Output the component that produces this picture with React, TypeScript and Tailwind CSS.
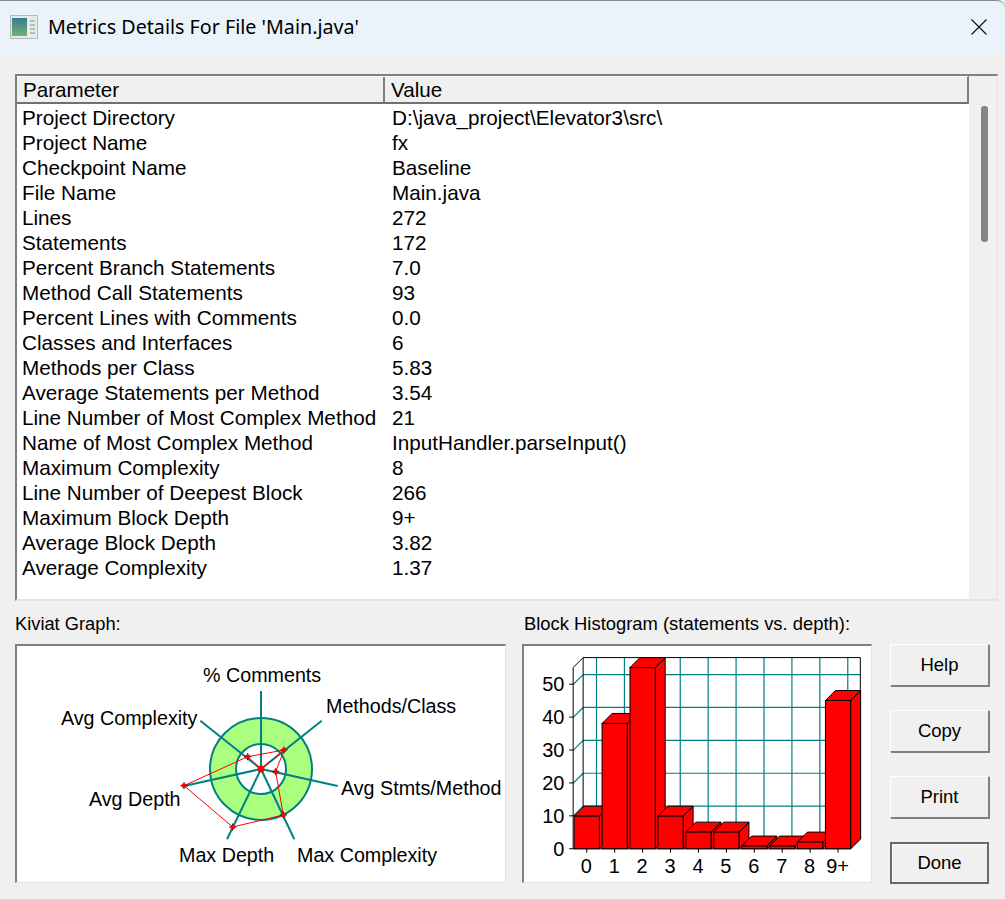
import React from 'react';

const metrics = [
  ['Project Directory', 'D:\\java_project\\Elevator3\\src\\'],
  ['Project Name', 'fx'],
  ['Checkpoint Name', 'Baseline'],
  ['File Name', 'Main.java'],
  ['Lines', '272'],
  ['Statements', '172'],
  ['Percent Branch Statements', '7.0'],
  ['Method Call Statements', '93'],
  ['Percent Lines with Comments', '0.0'],
  ['Classes and Interfaces', '6'],
  ['Methods per Class', '5.83'],
  ['Average Statements per Method', '3.54'],
  ['Line Number of Most Complex Method', '21'],
  ['Name of Most Complex Method', 'InputHandler.parseInput()'],
  ['Maximum Complexity', '8'],
  ['Line Number of Deepest Block', '266'],
  ['Maximum Block Depth', '9+'],
  ['Average Block Depth', '3.82'],
  ['Average Complexity', '1.37'],
];

const spokes = [
  [261, 691],
  [321.7, 720.7],
  [337.7, 786],
  [294.3, 839.3],
  [227, 839.3],
  [184, 786],
  [200.3, 720.7],
];

const kiviatPoints = [
  [284, 750],
  [275.7, 771.7],
  [283.3, 815],
  [232.7, 827],
  [184, 785.7],
  [247.7, 756.7],
];

const kiviatLabels = [
  { text: '% Comments', x: 203, y: 682 },
  { text: 'Methods/Class', x: 326, y: 713 },
  { text: 'Avg Stmts/Method', x: 341, y: 795 },
  { text: 'Max Complexity', x: 297, y: 862 },
  { text: 'Max Depth', x: 179, y: 862 },
  { text: 'Avg Depth', x: 89, y: 806 },
  { text: 'Avg Complexity', x: 61, y: 725 },
];

const bars = [
  { label: '0', value: 10, top: 816.3 },
  { label: '1', value: 38, top: 723.3 },
  { label: '2', value: 55, top: 667.3 },
  { label: '3', value: 10, top: 816.3 },
  { label: '4', value: 5, top: 832.3 },
  { label: '5', value: 5, top: 832.3 },
  { label: '6', value: 1, top: 846.3 },
  { label: '7', value: 1, top: 846.3 },
  { label: '8', value: 2, top: 842.3 },
  { label: '9+', value: 45, top: 700.3 },
];

const KiviatGraph = () => (
  <svg viewBox="17 646 488 236" className="block w-full h-full">
    <circle cx={261} cy={769} r={51} fill="#aaff7f" stroke="#008080" strokeWidth={2} />
    <circle cx={261} cy={769} r={25} fill="#ffffff" stroke="#008080" strokeWidth={2} />
    {spokes.map(([x, y], i) => (
      <line key={i} x1={261} y1={769} x2={x} y2={y} stroke="#008080" strokeWidth={2} />
    ))}
    <polygon
      points={kiviatPoints.map(([x, y]) => `${x},${y}`).join(' ')}
      fill="none"
      stroke="#ff0000"
      strokeWidth={1}
    />
    <polyline points="247.7,756.7 261,769 284,750" fill="none" stroke="#ff0000" strokeWidth={1} />
    <circle cx={261} cy={769} r={3.5} fill="#ff0000" />
    {kiviatPoints.map(([x, y], i) => (
      <g key={i}>
        <path d={`M${x - 3.5} ${y}H${x + 3.5}M${x} ${y - 3.5}V${y + 3.5}`} stroke="#000000" strokeWidth={1} />
        <rect x={x - 2} y={y - 2} width={4} height={4} fill="#ff0000" />
      </g>
    ))}
    {kiviatLabels.map((l) => (
      <text key={l.text} x={l.x} y={l.y} fontSize={19.7} fill="#000000" fontFamily="Liberation Sans, sans-serif">
        {l.text}
      </text>
    ))}
  </svg>
);

const Histogram = () => (
  <svg viewBox="523 646 348 236" className="block w-full h-full" fontFamily="Liberation Sans, sans-serif">
    {/* back wall */}
    {[674.3, 707.3, 740.3, 773.3, 806.3].map((y) => (
      <g key={y} stroke="#008080" strokeWidth={1.2}>
        <line x1={582.3} y1={y} x2={860.3} y2={y} />
        <line x1={572.3} y1={y + 10} x2={582.3} y2={y} />
      </g>
    ))}
    {[0, 1, 2, 3, 4, 5, 6, 7, 8, 9].map((i) => (
      <line key={i} x1={595.7 + 28 * i} y1={657.3} x2={595.7 + 28 * i} y2={839.3} stroke="#008080" strokeWidth={1.2} />
    ))}
    <path d="M572.3 667.3L582.3 657.3H860.3V839.3L850.3 849H572.3V667.3" fill="none" stroke="#000000" strokeWidth={1} />
    <line x1={582.3} y1={657.3} x2={582.3} y2={839.3} stroke="#000000" strokeWidth={1} />
    {[684, 717, 750, 783, 816, 849].map((y) => (
      <line key={y} x1={568.3} y1={y} x2={572.3} y2={y} stroke="#000000" strokeWidth={1} />
    ))}
    {[50, 40, 30, 20, 10, 0].map((v, i) => (
      <text key={v} x={563.5} y={691 + 33 * i} fontSize={20} textAnchor="end" fill="#000000">
        {v}
      </text>
    ))}
    {bars.map((b, i) => {
      const x = 573.3 + 28 * i;
      const w = 25.3;
      return (
        <g key={b.label} stroke="#000000" strokeWidth={1} fill="#ff0000">
          <path d={`M${x + w} ${b.top}l10 -10V839l-10 10Z`} />
          <path d={`M${x} ${b.top}l10 -10H${x + w + 10}l-10 10Z`} />
          <rect x={x} y={b.top} width={w} height={849 - b.top} />
          <line x1={x + w / 2} y1={849} x2={x + w / 2} y2={853} />
          <text x={x + w / 2 - 0.5} y={873} fontSize={20} textAnchor="middle" fill="#000000" stroke="none">
            {b.label}
          </text>
        </g>
      );
    })}
  </svg>
);

const TitleIcon = () => (
  <svg width={28} height={24} viewBox="0 0 28 24" className="shrink-0">
    <defs>
      <linearGradient id="icon-fill" x1="0" y1="0" x2="0" y2="1">
        <stop offset="0" stopColor="#3a7a92" />
        <stop offset="1" stopColor="#6fb27a" />
      </linearGradient>
    </defs>
    <rect x={0.5} y={0.5} width={27} height={23} fill="#e8eaea" stroke="#b4b8b8" />
    <rect x={2} y={3} width={15} height={18} fill="url(#icon-fill)" />
    <path d="M20 6h5M20 10h5M20 14h5M20 18h5" stroke="#a3afaf" strokeWidth={1.5} />
  </svg>
);

const DialogButton = ({ label, primary }: { label: string; primary?: boolean }) => (
  <button
    className={
      primary
        ? 'w-[99px] h-[42px] bg-[#f0f0f0] text-[18.5px] text-black border-2 border-[#696969] shadow-[inset_1px_1px_0_#ffffff]'
        : 'w-[99px] h-[42px] bg-[#f0f0f0] text-[18.5px] text-black border border-t-white border-l-white border-r-[#808080] border-b-[#808080] shadow-[1px_1px_0_#808080]'
    }
  >
    {label}
  </button>
);

export default function App() {
  return (
    <div className="w-[1005px] h-[899px] flex flex-col bg-[#f0f0f0] overflow-hidden text-black font-['Liberation_Sans',sans-serif]">
      {/* Title bar */}
      <div className="h-[53px] shrink-0 flex items-center bg-[#ebf3fa] border-t border-[#8a8a8a] rounded-tr-lg pl-[10px] pr-[18px]">
        <TitleIcon />
        <span className="ml-[10px] text-[19.7px] font-['Noto_Sans',sans-serif]">Metrics Details For File 'Main.java'</span>
        <svg width={16} height={16} viewBox="0 0 16 16" className="ml-auto -mt-[1px]">
          <path d="M0.5 0.5L15.5 15.5M15.5 0.5L0.5 15.5" stroke="#111111" strokeWidth={1.2} />
        </svg>
      </div>

      <div className="flex-1 flex flex-col pt-[21px] pl-[15px] pr-[7px]">
        {/* Metrics list */}
        <div className="h-[527px] flex border-t-2 border-l-2 border-t-[#808080] border-l-[#808080] border-r border-b-2 border-r-[#e3e3e3] border-b-[#e3e3e3]">
          <div className="w-[952px] flex flex-col bg-white">
            <div className="h-[28px] shrink-0 flex bg-[#f0f0f0] border-t border-white border-b-2 border-b-[#707070] border-r-2 border-r-[#808080] text-[20.6px] leading-[26px]">
              <div className="w-[368px] pl-[6px] border-r-2 border-r-[#808080]">Parameter</div>
              <div className="pl-[6px]">Value</div>
            </div>
            <div className="pt-[1px]">
              {metrics.map(([name, value]) => (
                <div key={name} className="h-[25px] flex text-[20.7px] leading-[25px]">
                  <div className="w-[375px] pl-[5px] whitespace-nowrap">{name}</div>
                  <div>{value}</div>
                </div>
              ))}
            </div>
          </div>
          <div className="flex-1 flex justify-center pl-[2px] pt-[30px]">
            <div className="w-[7px] h-[136px] rounded-[3px] bg-[#858585]" />
          </div>
        </div>

        {/* Graphs and buttons */}
        <div className="flex">
          <div className="w-[491px] flex flex-col">
            <div className="h-[43px] flex items-center pt-[2px] text-[18.3px]">Kiviat Graph:</div>
            <div className="h-[239px] bg-white border-t-2 border-l-2 border-t-[#808080] border-l-[#808080] border-r border-b border-r-[#e3e3e3] border-b-[#e3e3e3]">
              <KiviatGraph />
            </div>
          </div>
          <div className="ml-[16px] w-[350px] flex flex-col">
            <div className="h-[43px] flex items-center pl-[2px] pt-[2px] text-[18.4px] whitespace-nowrap">
              Block Histogram (statements vs. depth):
            </div>
            <div className="h-[239px] bg-white border-t-2 border-l-2 border-t-[#808080] border-l-[#808080] border-r border-b border-r-[#e3e3e3] border-b-[#e3e3e3]">
              <Histogram />
            </div>
          </div>
          <div className="ml-[18px] pt-[43px] flex flex-col gap-[24px]">
            <DialogButton label="Help" />
            <DialogButton label="Copy" />
            <DialogButton label="Print" />
            <DialogButton label="Done" primary />
          </div>
        </div>
      </div>
    </div>
  );
}
